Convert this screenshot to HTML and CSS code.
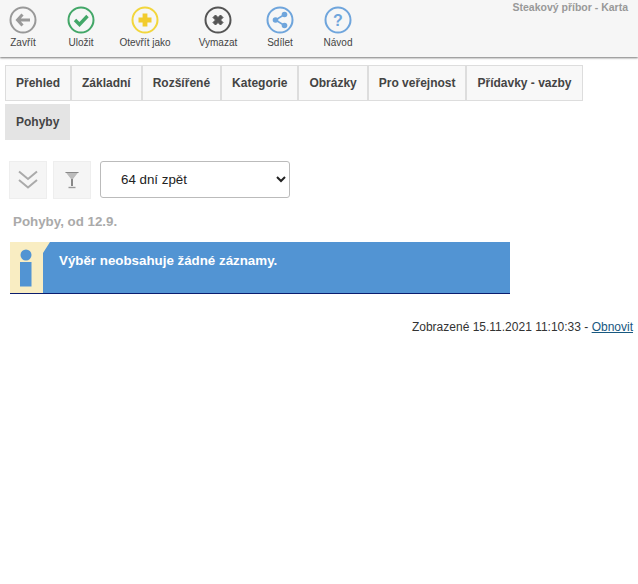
FILE: index.html
```html
<!DOCTYPE html>
<html lang="cs">
<head>
<meta charset="utf-8">
<title>Steakový příbor - Karta</title>
<link rel="stylesheet" href="styles.css">
</head>
<body>
<header class="toolbar">
  <nav class="tools">
    <a class="tool">
      <svg class="ico" viewBox="0 0 28 28"><circle cx="14" cy="14" r="12.5" fill="none" stroke="#999" stroke-width="2"/><path d="M13.5 8.500 8.500 14 13.500 19.500M9.500 14H21" fill="none" stroke="#999" stroke-width="3"/></svg>
      <span>Zavřít</span>
    </a>
    <a class="tool">
      <svg class="ico" viewBox="0 0 28 28"><circle cx="14" cy="14" r="12.5" fill="none" stroke="#43a768" stroke-width="2"/><path d="M8 14 12.5 18.5 20.5 10" fill="none" stroke="#43a768" stroke-width="3.4"/></svg>
      <span>Uložit</span>
    </a>
    <a class="tool">
      <svg class="ico" viewBox="0 0 28 28"><circle cx="14" cy="14" r="12.5" fill="none" stroke="#f2d63c" stroke-width="2"/><path d="M11.6 7.5H16.4V11.6H20.5V16.4H16.4V20.5H11.6V16.4H7.5V11.6H11.6Z" fill="#f2cc2e"/></svg>
      <span>Otevřít jako</span>
    </a>
    <a class="tool">
      <svg class="ico" viewBox="0 0 28 28"><circle cx="14" cy="14" r="12.5" fill="none" stroke="#555" stroke-width="2"/><path d="M9 11.5 11.5 9 14 11.5 16.5 9 19 11.5 16.5 14 19 16.5 16.5 19 14 16.5 11.5 19 9 16.5 11.5 14Z" fill="#555" stroke="#555" stroke-linejoin="round"/></svg>
      <span>Vymazat</span>
    </a>
    <a class="tool">
      <svg class="ico" viewBox="0 0 28 28"><circle cx="14" cy="14" r="12.5" fill="none" stroke="#6fa5dc" stroke-width="2"/><path d="M18.5 8.500 9.500 14 18.500 19.500" fill="none" stroke="#6fa5dc" stroke-width="1.6"/><circle cx="18.5" cy="8.500" r="2.8" fill="#6fa5dc"/><circle cx="9.500" cy="14" r="2.8" fill="#6fa5dc"/><circle cx="18.500" cy="19.500" r="2.8" fill="#6fa5dc"/></svg>
      <span>Sdílet</span>
    </a>
    <a class="tool">
      <svg class="ico" viewBox="0 0 28 28"><circle cx="14" cy="14" r="12.5" fill="none" stroke="#6fa5dc" stroke-width="2"/><text x="14" y="19.500" class="q">?</text></svg>
      <span>Návod</span>
    </a>
  </nav>
  <div class="doc-title">Steakový příbor - Karta</div>
</header>

<div class="tabs">
  <a class="tab">Přehled</a>
  <a class="tab">Základní</a>
  <a class="tab">Rozšířené</a>
  <a class="tab">Kategorie</a>
  <a class="tab">Obrázky</a>
  <a class="tab">Pro veřejnost</a>
  <a class="tab">Přídavky - vazby</a>
  <a class="tab tab-active">Pohyby</a>
</div>

<div class="filters">
  <button class="square" type="button" aria-label="Rozbalit">
    <svg viewBox="0 0 20 20" width="20" height="20"><path d="M1 1.500 10 9 19 1.500M1 10 10 17.500 19 10" fill="none" stroke="#aaa" stroke-width="2"/></svg>
  </button>
  <button class="square" type="button" aria-label="Filtr">
    <svg viewBox="0 0 16 18" width="16" height="18"><path d="M1.500 1H14.500L9 8V15H7V8Z" fill="#bbb"/><path d="M1.500 1.500H14.500" stroke="#888" stroke-width="1"/><path d="M7 8H9V15H7Z" fill="#888"/><path d="M4.500 16.500H11.500" stroke="#999" stroke-width="1.400"/></svg>
  </button>
  <select class="period">
    <option>64 dní zpět</option>
  </select>
</div>

<h2 class="heading">Pohyby, od 12.9.</h2>

<div class="notice">
  <svg class="notice-mark" viewBox="0 0 40 51" width="40" height="51">
    <path d="M0 0H40L33 11V51H0Z" fill="#f9edc2"/>
    <circle cx="16" cy="13" r="5.500" fill="#5294d3"/>
    <rect x="10" y="20" width="11.500" height="24.500" fill="#5294d3"/>
  </svg>
  <p class="notice-text">Výběr neobsahuje žádné záznamy.</p>
</div>

<p class="stamp">Zobrazené 15.11.2021 11:10:33 - <a class="refresh" href="#">Obnovit</a></p>
</body>
</html>
```
FILE: styles.css
```css
* { box-sizing: border-box; }
html, body { margin: 0; padding: 0; background: #fff; }
body { font-family: "Liberation Sans", Arial, sans-serif; color: #333; }

.toolbar {
  display: flex;
  justify-content: space-between;
  height: 57px;
  background: #f6f6f6;
  box-shadow: 0 1px 2px #777;
  margin-bottom: 8px;
}
.tools {
  display: grid;
  grid-template-columns: 46px 70px 58px 88px 36px 80px;
  padding-top: 6px;
}
.tool {
  display: flex;
  flex-direction: column;
  align-items: center;
  white-space: nowrap;
  font-size: 10px;
  line-height: 12px;
  color: #444;
}
.ico { width: 28px; height: 28px; margin-bottom: 3px; display: block; }
.q { font: bold 16px "Liberation Sans", Arial, sans-serif; fill: #6fa5dc; text-anchor: middle; }
.doc-title {
  padding: 1px 10px 0 0;
  font-size: 10.5px;
  line-height: 12px;
  font-weight: bold;
  color: #999;
}

.tabs {
  display: flex;
  flex-wrap: wrap;
  row-gap: 3px;
  padding: 0 5px;
}
.tab {
  height: 36px;
  padding: 0 10px;
  border: 1px solid #ddd;
  background: #f8f8f8;
  font-size: 12px;
  font-weight: bold;
  line-height: 34px;
  color: #444;
}
.tab-active { background: #e4e4e4; border-color: #e4e4e4; }

.filters {
  display: flex;
  align-items: flex-start;
  margin-top: 21px;
  padding-left: 9px;
  gap: 6px;
}
.square {
  width: 38px;
  height: 38px;
  padding: 0;
  display: flex;
  align-items: center;
  justify-content: center;
  background: #f5f5f5;
  border: 1px solid #eee;
}
.period {
  width: 190px;
  height: 37px;
  margin-left: 3px;
  padding-left: 16px;
  background: #fff;
  border: 1px solid #bbb;
  border-radius: 3px;
  font-family: "Liberation Sans", Arial, sans-serif;
  font-size: 13.33px;
  color: #222;
}

.heading {
  margin: 14px 0 0 13px;
  font-size: 13.33px;
  line-height: 17px;
  font-weight: bold;
  color: #aaa;
}

.notice {
  display: flex;
  width: 500px;
  height: 52px;
  margin: 12px 0 0 10px;
  background: #5294d3;
  border-bottom: 1px solid #0b1d6e;
}
.notice-mark { flex: none; display: block; }
.notice-text {
  margin: 11px 0 0 9px;
  font-size: 13.33px;
  line-height: 16px;
  font-weight: bold;
  color: #fff;
}

.stamp {
  margin: 26px 5px 0 0;
  text-align: right;
  font-size: 12px;
  line-height: 14px;
  color: #333;
}
.refresh { color: #17587f; }
```
